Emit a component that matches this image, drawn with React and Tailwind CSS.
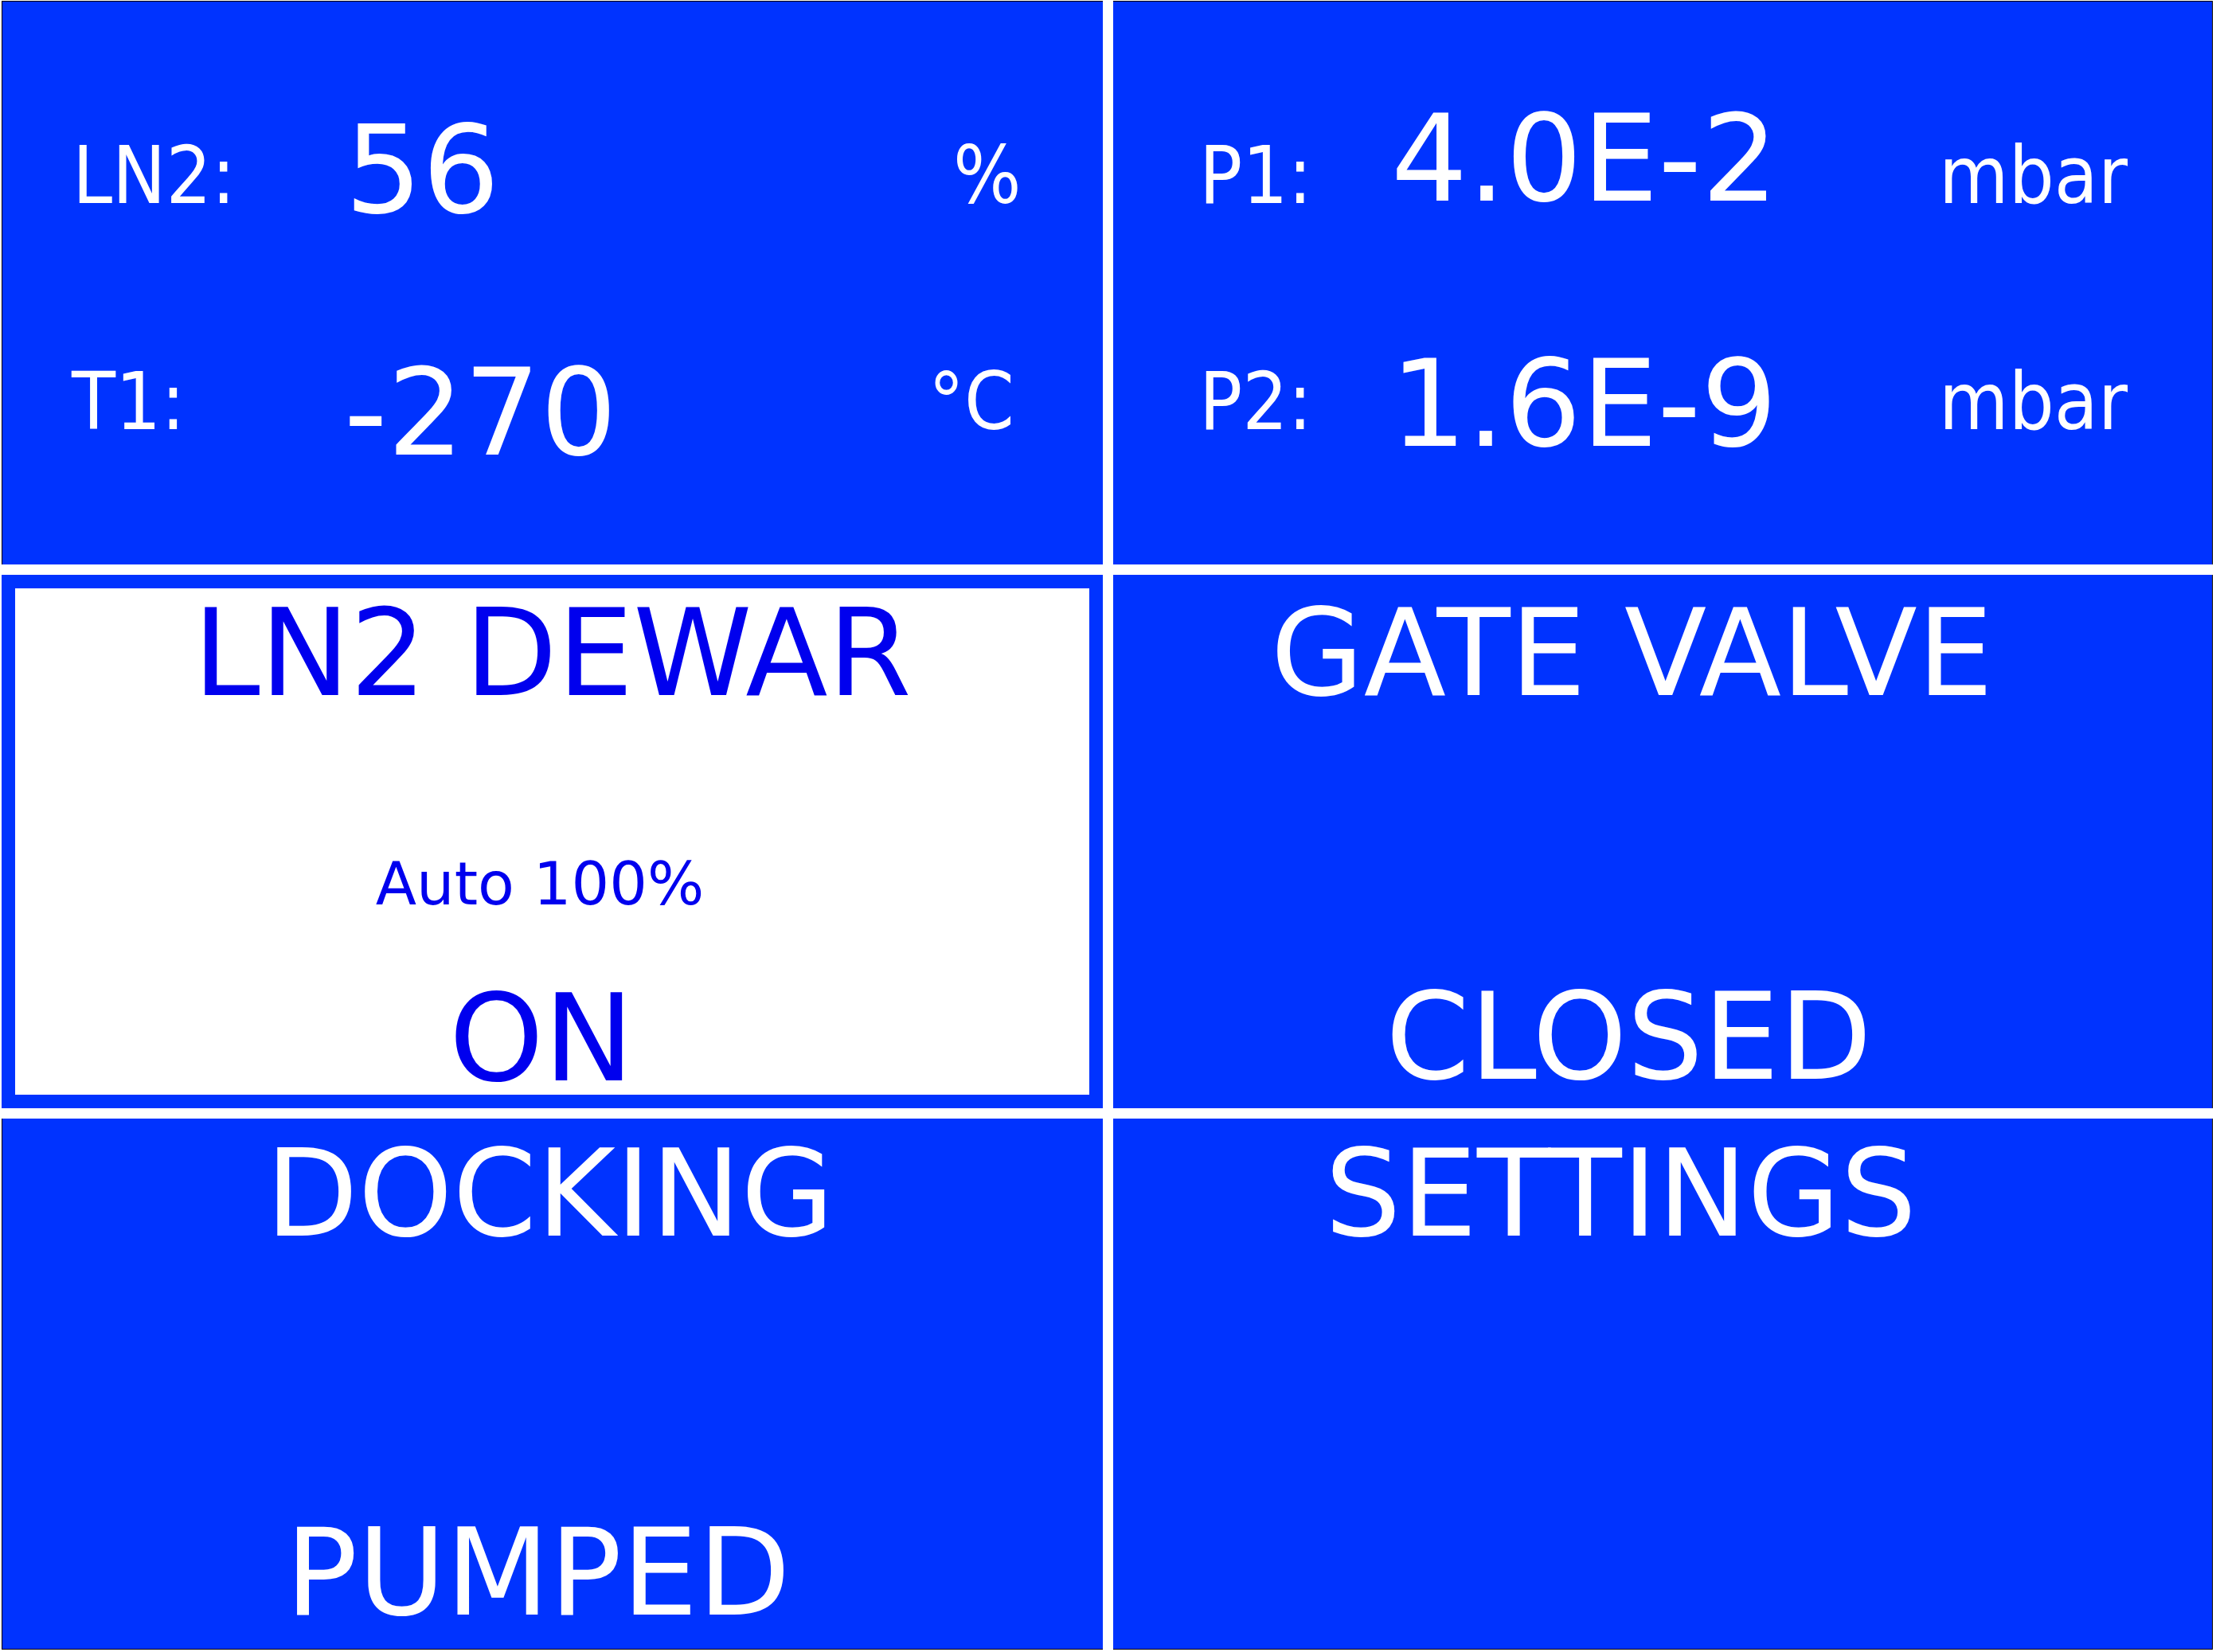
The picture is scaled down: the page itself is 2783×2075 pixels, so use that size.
import React from "react";

// small captions use the condensed cut, values and titles the normal one
const LABEL = "font-['DejaVu_Sans_Condensed','DejaVu_Sans',sans-serif] font-stretch-condensed text-[100px]";

const Reading = ({ label, value, unit, labelCls, valueCls, unitCls }) => (
  <div className="flex items-start">
    <div className={labelCls}>{label}</div>
    <div className={valueCls}>{value}</div>
    <div className={unitCls}>{unit}</div>
  </div>
);

export default function App() {
  return (
    <div className="w-[2783px] h-[2075px] bg-white pl-[2px] pt-[1px] font-['DejaVu_Sans',sans-serif] leading-none">
      <div className="grid grid-cols-[1383px_1381px] grid-rows-[708px_670px_667px] gap-[13px]">
        {/* top left: level + temperature */}
        <div className="bg-[#0033ff] border-t border-l border-black text-white overflow-hidden">
          <div className="h-[400px] pl-[88px]">
            <Reading
              label="LN2:"
              value="56"
              unit="%"
              labelCls={"w-[342px] mt-[169px] " + LABEL}
              valueCls="w-[764px] mt-[136px] text-[153px]"
              unitCls={"mt-[169px] " + LABEL}
            />
          </div>
          <div className="pl-[87px]">
            <Reading
              label="T1:"
              value="-270"
              unit="°C"
              labelCls={"w-[342px] mt-[53px] " + LABEL}
              valueCls="w-[734px] mt-[42px] text-[151px]"
              unitCls={"mt-[53px] " + LABEL}
            />
          </div>
        </div>

        {/* top right: pressures */}
        <div className="bg-[#0033ff] border-t border-r border-black text-white overflow-hidden">
          <div className="h-[400px] pl-[108px]">
            <Reading
              label="P1:"
              value="4.0E-2"
              unit="mbar"
              labelCls={"w-[241px] mt-[169px] " + LABEL}
              valueCls="w-[688px] mt-[123px] text-[151px]"
              unitCls={"mt-[169px] " + LABEL}
            />
          </div>
          <div className="pl-[108px]">
            <Reading
              label="P2:"
              value="1.6E-9"
              unit="mbar"
              labelCls={"w-[240px] mt-[53px] " + LABEL}
              valueCls="w-[689px] mt-[31px] text-[151px]"
              unitCls={"mt-[53px] " + LABEL}
            />
          </div>
        </div>

        {/* LN2 dewar, active */}
        <div className="bg-white border-[17px] border-[#0033ff] text-[#0000ee] flex flex-col">
          <div className="mt-[7px] text-center text-[151px]">LN2 DEWAR</div>
          <div className="mt-[176px] text-center pr-[31px] text-[75px]">Auto 100%</div>
          <div className="mt-[82px] text-center pr-[27px] text-[151px]">ON</div>
        </div>

        {/* gate valve */}
        <div className="bg-[#0033ff] border-r border-black text-white flex flex-col">
          <div className="mt-[24px] text-center pr-[77px] text-[151px]">GATE VALVE</div>
          <div className="mt-[331px] text-center pr-[85px] text-[151px]">CLOSED</div>
        </div>

        {/* docking */}
        <div className="bg-[#0033ff] border-l border-b border-black text-white flex flex-col">
          <div className="mt-[20px] text-center pr-[7px] text-[151px]">DOCKING</div>
          <div className="mt-[325px] text-center pr-[37px] text-[151px]">PUMPED</div>
        </div>

        {/* settings */}
        <div className="bg-[#0033ff] border-r border-b border-black text-white flex flex-col">
          <div className="mt-[20px] text-center pr-[105px] text-[151px]">SETTINGS</div>
        </div>
      </div>
    </div>
  );
}
